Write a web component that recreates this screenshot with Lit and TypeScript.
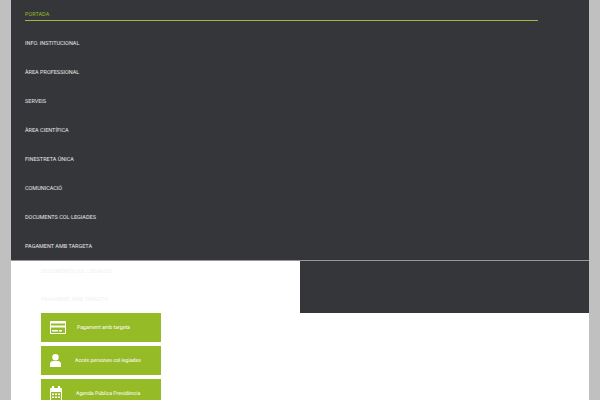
import { LitElement, html, css, svg } from "lit";
import { customElement } from "lit/decorators.js";

const card = svg`<svg class="ic" width="16" height="13" viewBox="0 0 16 13"><path fill="#fff" fill-rule="evenodd" d="M1 0h14a1 1 0 0 1 1 1v11a1 1 0 0 1-1 1H1a1 1 0 0 1-1-1V1a1 1 0 0 1 1-1zM1 2.500v2h14v-2zm0 4v5.500h14V6.500zm1 2.500h6v1.500H2zm7 0h3v1.500H9z"/></svg>`;
const user = svg`<svg class="ic" width="11" height="13" viewBox="0 0 11 13"><circle cx="5.500" cy="3.300" r="3.200" fill="#fff"/><path fill="#fff" d="M0 13v-3c0-2 1.500-3 3-3h5c1.500 0 3 1 3 3v3z"/></svg>`;
const cal = svg`<svg class="ic" width="12" height="15" viewBox="0 0 12 15"><path fill="#fff" fill-rule="evenodd" d="M1 2h1V0h2v2h4V0h2v2h1a1 1 0 0 1 1 1v11a1 1 0 0 1-1 1H1a1 1 0 0 1-1-1V3a1 1 0 0 1 1-1zm0 4v8h10V6zm1 1.500h2v1.500H2zm3 0h2v1.500H5zm3 0h2v1.500H8zm-6 3h2V12H2zm3 0h2V12H5zm3 0h2V12H8z"/></svg>`;

const items = [
  "Info. institucional",
  "Àrea professional",
  "Serveis",
  "Àrea científica",
  "Finestreta única",
  "Comunicació",
  "Documents col·legiades",
  "Pagament amb targeta",
];

const buttons = [
  { icon: card, label: "Pagament amb targeta", inset: 3 },
  { icon: user, label: "Accés persones col·legiades", inset: 1 },
  { icon: cal, label: "Agenda Pública Presidència", inset: 2 },
];

@customElement("app-root")
export class AppRoot extends LitElement {
  static styles = css`
    :host {
      display: block;
      width: 600px;
      height: 400px;
      overflow: hidden;
      background: #c0c0c0;
      font-family: Roboto, "Liberation Sans", sans-serif;
      text-rendering: geometricPrecision;
    }
    .page {
      margin: 0 11px;
      height: 400px;
      background: #fff;
    }
    nav {
      height: 261px;
      box-sizing: border-box;
      background: #35363a;
      padding: 5px 51px 0 14px;
      display: flex;
      flex-direction: column;
      border-bottom: 1px solid #98989c;
    }
    nav a {
      height: 29px;
      flex: none;
      box-sizing: border-box;
      padding-top: 6px;
      font-size: 5.5px;
      line-height: 9px;
      color: #e6e6e6;
      text-transform: uppercase;
    }
    nav a.active {
      height: 16px;
      padding-top: 6px;
      color: #95b82a;
      border-bottom: 1px solid #a0b84a;
      margin-bottom: 13px;
    }
    .lower {
      display: flex;
      align-items: flex-start;
    }
    .side {
      width: 289px;
      box-sizing: border-box;
      padding: 7px 0 0 30px;
    }
    .ghost {
      height: 28px;
      font-size: 5.5px;
      line-height: 9px;
      color: #f1f1f1;
      text-transform: uppercase;
    }
    .ghost:nth-child(2) { height: 17px; }
    .btns {
      display: flex;
      flex-direction: column;
      gap: 4px;
    }
    .btn {
      width: 120px;
      height: 29px;
      flex: none;
      background: #95bc27;
      color: #fff;
      display: flex;
      align-items: center;
      font-size: 5.2px;
      white-space: nowrap;
      padding-left: 9px;
      box-sizing: border-box;
    }
    .slot {
      width: 24px;
      flex: none;
    }
    .ic { display: block; }
    .block {
      width: 289px;
      height: 52px;
      background: #35363a;
    }
  `;

  render() {
    return html`<div class="page">
      <nav>
        <a class="active">Portada</a>
        ${items.map((i) => html`<a>${i}</a>`)}
      </nav>
      <div class="lower">
        <div class="side">
          <div class="ghost">Documents col·legiades</div>
          <div class="ghost">Pagament amb targeta</div>
          <div class="btns">
            ${buttons.map(
              (b) => html`<div class="btn">
                <span class="slot">${b.icon}</span>
                <span style="margin-left:${b.inset}px">${b.label}</span>
              </div>`
            )}
          </div>
        </div>
        <div class="block"></div>
      </div>
    </div>`;
  }
}
